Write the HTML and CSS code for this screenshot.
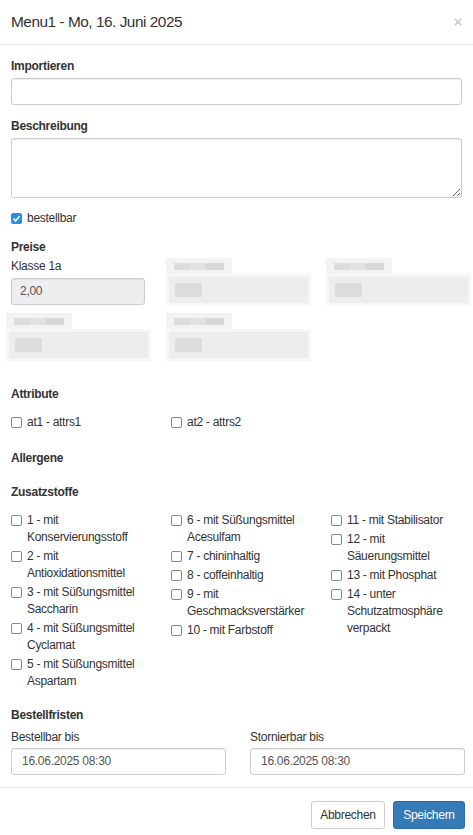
FILE: index.html
```html
<!DOCTYPE html>
<html lang="de">
<head>
<meta charset="utf-8">
<title>Menu1</title>
<link rel="stylesheet" href="styles.css">
</head>
<body>
<div class="modal">
  <div class="modal-header">
    <h4 class="modal-title">Menu1 - Mo, 16. Juni 2025</h4>
    <span class="close">×</span>
  </div>
  <div class="modal-body">
    <div class="group g-import">
      <label class="lbl">Importieren</label>
      <input class="ctrl" type="text">
    </div>
    <div class="group g-desc">
      <label class="lbl">Beschreibung</label>
      <textarea class="ctrl area"></textarea>
    </div>
    <div class="group g-check">
      <label class="chk"><span class="box checked"><svg viewBox="0 0 12 12" width="11" height="11"><path d="M2.6 6.2 L5 8.5 L9.4 3.6" fill="none" stroke="#fff" stroke-width="1.7"/></svg></span><span>bestellbar</span></label>
    </div>
    <div class="group g-preise">
      <div class="lbl">Preise</div>
      <div class="price-grid">
        <div class="price">
          <div class="sublbl">Klasse 1a</div>
          <div class="ctrl disabled">2,00</div>
        </div>
        <div class="price blurred">
          <div class="mz-label"><i class="c1"></i><i class="c2"></i><i class="c3"></i></div>
          <div class="mz-input"><i class="p1"></i></div>
        </div>
        <div class="price blurred">
          <div class="mz-label"><i class="c1"></i><i class="c2"></i><i class="c3"></i></div>
          <div class="mz-input"><i class="p1"></i></div>
        </div>
        <div class="price blurred">
          <div class="mz-label"><i class="c1"></i><i class="c2"></i><i class="c3"></i></div>
          <div class="mz-input"><i class="p1"></i></div>
        </div>
        <div class="price blurred">
          <div class="mz-label"><i class="c1"></i><i class="c2"></i><i class="c3"></i></div>
          <div class="mz-input"><i class="p1"></i></div>
        </div>
      </div>
    </div>
    <div class="group g-attr">
      <div class="lbl">Attribute</div>
      <div class="col-grid">
        <label class="chk"><span class="box"></span><span>at1 - attrs1</span></label>
        <label class="chk"><span class="box"></span><span>at2 - attrs2</span></label>
      </div>
    </div>
    <div class="group g-allerg">
      <div class="lbl">Allergene</div>
    </div>
    <div class="group g-zusatz">
      <div class="lbl">Zusatzstoffe</div>
      <div class="col-grid">
        <div class="col">
          <label class="chk"><span class="box"></span><span>1 - mit Konservierungsstoff</span></label>
          <label class="chk"><span class="box"></span><span>2 - mit Antioxidationsmittel</span></label>
          <label class="chk"><span class="box"></span><span>3 - mit Süßungsmittel Saccharin</span></label>
          <label class="chk"><span class="box"></span><span>4 - mit Süßungsmittel Cyclamat</span></label>
          <label class="chk"><span class="box"></span><span>5 - mit Süßungsmittel Aspartam</span></label>
        </div>
        <div class="col">
          <label class="chk"><span class="box"></span><span>6 - mit Süßungsmittel Acesulfam</span></label>
          <label class="chk"><span class="box"></span><span>7 - chininhaltig</span></label>
          <label class="chk"><span class="box"></span><span>8 - coffeinhaltig</span></label>
          <label class="chk"><span class="box"></span><span>9 - mit Geschmacksverstärker</span></label>
          <label class="chk"><span class="box"></span><span>10 - mit Farbstoff</span></label>
        </div>
        <div class="col">
          <label class="chk"><span class="box"></span><span>11 - mit Stabilisator</span></label>
          <label class="chk"><span class="box"></span><span>12 - mit Säuerungsmittel</span></label>
          <label class="chk"><span class="box"></span><span>13 - mit Phosphat</span></label>
          <label class="chk"><span class="box"></span><span>14 - unter Schutzatmosphäre verpackt</span></label>
        </div>
      </div>
    </div>
    <div class="group g-fristen">
      <div class="lbl">Bestellfristen</div>
      <div class="two-grid">
        <div>
          <div class="sublbl2">Bestellbar bis</div>
          <div class="ctrl date">16.06.2025 08:30</div>
        </div>
        <div>
          <div class="sublbl2">Stornierbar bis</div>
          <div class="ctrl date">16.06.2025 08:30</div>
        </div>
      </div>
    </div>
  </div>
  <div class="modal-footer">
    <button class="btn btn-default">Abbrechen</button>
    <button class="btn btn-primary">Speichern</button>
  </div>
</div>
</body>
</html>
```

FILE: styles.css
```css
* { box-sizing: border-box; }
html, body { margin: 0; padding: 0; background: #fff; }
body {
  font-family: "Liberation Sans", Arial, Helvetica, sans-serif;
  font-size: 12px;
  line-height: 17px;
  color: #333;
  letter-spacing: -0.28px;
}
.modal { width: 473px; }
.modal-header {
  height: 45px;
  border-bottom: 1px solid #e5e5e5;
  padding: 11px 11px 0 11px;
  display: flex;
  justify-content: space-between;
  align-items: flex-start;
}
.modal-title {
  margin: 0;
  font-size: 15.4px;
  line-height: 22px;
  font-weight: normal;
  letter-spacing: -0.48px;
  color: #333;
}
.close {
  font-size: 15px;
  font-weight: bold;
  line-height: 17px;
  color: #000;
  opacity: 0.2;
  margin-top: 2px;
  margin-right: 0;
}
.modal-body { padding: 13px 11px 12px 11px; }
.group { display: flex; flex-direction: column; }
.lbl { display: block; font-weight: bold; height: 17px; }
.g-import .lbl, .g-desc .lbl { margin-bottom: 3px; }
.g-import { margin-bottom: 13px; }
.g-desc { margin-bottom: 12px; }
.g-check { margin-bottom: 12px; }
.g-preise { margin-bottom: 25px; }
.g-preise .lbl { margin-bottom: 2px; }
.g-attr { margin-bottom: 19px; }
.g-attr .lbl, .g-zusatz .lbl { margin-bottom: 11px; }
.g-allerg { margin-bottom: 17px; }
.g-zusatz { margin-bottom: 17px; }
.g-fristen .lbl { margin-bottom: 5px; }

.ctrl {
  display: block;
  width: 100%;
  height: 27px;
  border: 1px solid #ccc;
  border-radius: 3px;
  box-shadow: inset 0 1px 1px rgba(0,0,0,0.075);
  background: #fff;
  font-family: inherit;
  font-size: 12px;
  color: #555;
  padding: 0 10px;
  line-height: 25px;
  margin: 0;
}
.area { height: 60px; resize: vertical; }
.disabled { background: #eee; width: 134px; padding-left: 8px; }
.date { padding-left: 10px; }

.chk {
  display: flex;
  align-items: flex-start;
  gap: 5px;
  cursor: pointer;
}
.box {
  flex: 0 0 11px;
  width: 11px;
  height: 11px;
  margin-top: 3px;
  border: 1px solid #8a8a8a;
  border-radius: 2px;
  background: #fff;
  display: flex;
}
.box.checked { background: #2a8fe0; border-color: #2a8fe0; }
.box.checked svg { margin: -1px; }

.price-grid {
  display: grid;
  grid-template-columns: 134px 134px 134px;
  column-gap: 26px;
  row-gap: 7px;
}
.sublbl { height: 17px; margin-bottom: 3px; }
.blurred { margin-left: -5px; }
.mz-label {
  width: 66px;
  height: 16px;
  background: #f3f3f3;
  position: relative;
}
.mz-label i { position: absolute; top: 5px; height: 7px; background: #dcdcdc; }
.mz-label .c1 { left: 8px; width: 16px; }
.mz-label .c2 { left: 24px; width: 16px; background: #e2e2e2; }
.mz-label .c3 { left: 40px; width: 18px; background: #d8d8d8; }
.mz-input {
  width: 145px;
  height: 32px;
  background: #ededed;
  border: 3px solid #f7f7f7;
  position: relative;
}
.mz-input i { position: absolute; left: 6px; top: 6px; width: 27px; height: 14px; background: #dcdcdc; }

.col-grid {
  display: grid;
  grid-template-columns: 147px 147px 134px;
  column-gap: 13px;
}
.col { display: flex; flex-direction: column; gap: 2px; }

.two-grid {
  display: grid;
  grid-template-columns: 215px 215px;
  column-gap: 24px;
}
.sublbl2 { height: 17px; margin-bottom: 2px; }

.modal-footer {
  border-top: 1px solid #e5e5e5;
  padding: 13px 8px 13px 11px;
  display: flex;
  justify-content: flex-end;
  gap: 8px;
}
.btn {
  height: 28px;
  font-family: inherit;
  font-size: 12px;
  letter-spacing: -0.28px;
  border-radius: 3px;
  padding: 0 6px;
  border: 1px solid #ccc;
  margin: 0;
}
.btn-default { background: #fff; color: #333; width: 74px; }
.btn-primary { background: #337ab7; border-color: #2e6da4; color: #fff; width: 72px; }
```
